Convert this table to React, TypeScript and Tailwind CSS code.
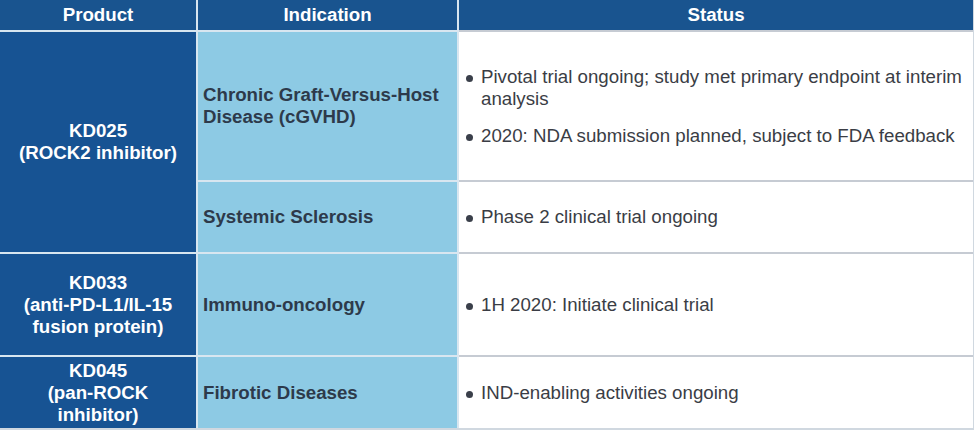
import React from "react";

const Bullet = ({ children }: { children: React.ReactNode }) => (
  <div className="flex items-start">
    <span className="mt-[9px] mr-[8px] h-[7px] w-[7px] shrink-0 rounded-full bg-[#3a3f4a]" />
    <span>{children}</span>
  </div>
);

export default function App() {
  const head = "flex items-center justify-center bg-[#19548f] text-white font-bold text-[18.7px]";
  const prod = "flex flex-col items-center justify-center bg-[#175393] text-white font-bold text-[18.7px] leading-[22px] text-center";
  const ind = "flex items-center bg-[#8dcae4] pl-[5px] text-[#2d3a4b] font-bold text-[18.7px] leading-[22px]";
  const stat = "flex flex-col justify-center bg-white pl-[7px] text-[#3a3d45] text-[18.7px] leading-[22px] shadow-[0_-2px_0_#c6cbd3]";
  return (
    <div
      className="w-[975px] h-[431px] bg-white"
      style={{ fontFamily: '"Liberation Sans", Arial, sans-serif' }}
    >
      <div className="grid w-[974px] grid-cols-[196px_259px_1fr] grid-rows-[30px_148px_70px_101px_71px] gap-[2px] bg-[#d8e6f0] border-b-2 border-r border-[#d0d8e0]">
        <div className={head}>Product</div>
        <div className={head}>Indication</div>
        <div className={head}>Status</div>

        <div className={`${prod} row-span-2`}>
          <div>KD025</div>
          <div>(ROCK2 inhibitor)</div>
        </div>
        <div className={ind}>
          <div>
            Chronic Graft-Versus-Host
            <br />
            Disease (cGVHD)
          </div>
        </div>
        <div className={`${stat} gap-[15px]`}>
          <Bullet>
            Pivotal trial ongoing; study met primary endpoint at interim
            <br />
            analysis
          </Bullet>
          <Bullet>2020: NDA submission planned, subject to FDA feedback</Bullet>
        </div>

        <div className={ind}>Systemic Sclerosis</div>
        <div className={stat}>
          <Bullet>Phase 2 clinical trial ongoing</Bullet>
        </div>

        <div className={prod}>
          <div>KD033</div>
          <div>(anti-PD-L1/IL-15</div>
          <div>fusion protein)</div>
        </div>
        <div className={ind}>Immuno-oncology</div>
        <div className={stat}>
          <Bullet>1H 2020: Initiate clinical trial</Bullet>
        </div>

        <div className={prod}>
          <div>KD045</div>
          <div>(pan-ROCK</div>
          <div>inhibitor)</div>
        </div>
        <div className={ind}>Fibrotic Diseases</div>
        <div className={stat}>
          <Bullet>IND-enabling activities ongoing</Bullet>
        </div>
      </div>
    </div>
  );
}
